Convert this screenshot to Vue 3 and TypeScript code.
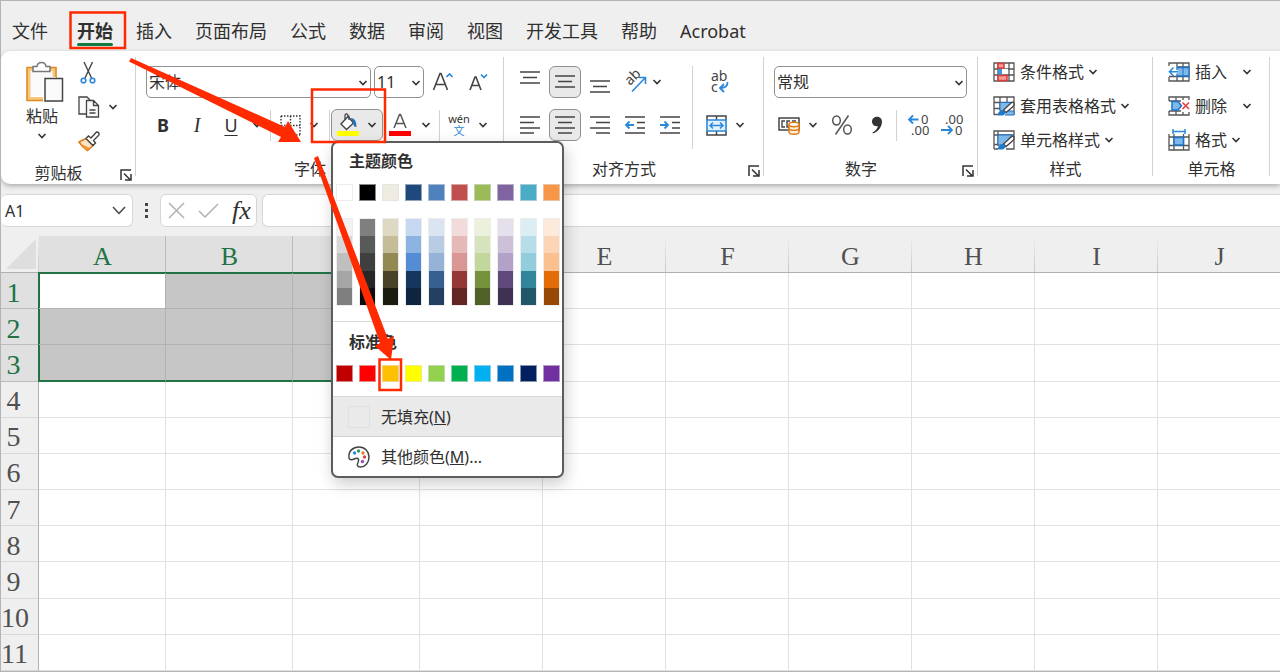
<script setup lang="ts">
import { h, ref } from 'vue'

const tabs = ['文件', '开始', '插入', '页面布局', '公式', '数据', '审阅', '视图', '开发工具', '帮助', 'Acrobat']
const activeTab = ref('开始')

const Chevron = () =>
  h('svg', { class: 'chevron', width: 10, height: 6, viewBox: '0 0 10 6', 'aria-hidden': 'true' }, [
    h('path', { d: 'M1.5 1 5 4.5 8.500 1', fill: 'none', stroke: '#333', 'stroke-width': 1.6 }),
  ])

const Launcher = () =>
  h('svg', { width: 12, height: 12, viewBox: '0 0 12 12', 'aria-hidden': 'true' }, [
    h('path', { d: 'M1 11V1H11M4 4.500 10 10.500M11 5V11H5', fill: 'none', stroke: '#333', 'stroke-width': 1.5 }),
  ])

const themeColumns: string[][] = [
  ['#ffffff', '#f2f2f2', '#d8d8d8', '#bfbfbf', '#a5a5a5', '#7f7f7f'],
  ['#000000', '#7f7f7f', '#595959', '#3f3f3f', '#262626', '#0c0c0c'],
  ['#eeece1', '#ddd9c3', '#c4bd97', '#938953', '#494429', '#1d1b10'],
  ['#1f497d', '#c6d9f0', '#8db3e2', '#548dd4', '#17365d', '#0f243e'],
  ['#4f81bd', '#dbe5f1', '#b8cce4', '#95b3d7', '#366092', '#244061'],
  ['#c0504d', '#f2dcdb', '#e5b9b7', '#d99694', '#953734', '#632423'],
  ['#9bbb59', '#ebf1dd', '#d7e3bc', '#c3d69b', '#76923c', '#4f6128'],
  ['#8064a2', '#e5e0ec', '#ccc1d9', '#b2a2c7', '#5f497a', '#3f3151'],
  ['#4bacc6', '#dbeef3', '#b7dde8', '#92cddc', '#31859b', '#205867'],
  ['#f79646', '#fdeada', '#fbd5b5', '#fac08f', '#e36c09', '#974806'],
]
const standardColors = ['#c00000', '#ff0000', '#ffc000', '#ffff00', '#92d050', '#00b050', '#00b0f0', '#0070c0', '#002060', '#7030a0']

const columns = ['A', 'B', 'C', 'D', 'E', 'F', 'G', 'H', 'I', 'J']
const rows = 11
const selection = { cols: 3, rows: 3 }

function cellClass(r: number, c: number) {
  const inside = r <= selection.rows && c < selection.cols
  return {
    picked: inside,
    active: r === 1 && c === 0,
    'edge-top': inside && r === 1,
    'edge-bottom': inside && r === selection.rows,
    'edge-left': inside && c === 0,
    'edge-right': inside && c === selection.cols - 1,
  }
}
</script>

<template>
  <div class="app">
    <nav class="tabs" aria-label="功能区">
      <button v-for="t in tabs" :key="t" type="button" class="tab" :class="{ current: t === activeTab }" @click="activeTab = t">{{ t }}</button>
    </nav>

    <section class="ribbon">
      <div class="group">
        <div class="clip">
          <button type="button" class="paste">
            <svg width="38" height="42" viewBox="0 0 38 42">
              <path d="M2.500 8H28.500V38H2.500Z" fill="#fff" stroke="#f7c77c" stroke-width="4" />
              <path d="M1 6.500H30V39.500H1Z" fill="none" stroke="#e08a26" stroke-width="1.500" />
              <path d="M5 10H26V35H5Z" fill="#fafafa" />
              <path d="M7 10.500V5.500H11C11.500 0 19.500 0 20 5.500H24V10.500Z" fill="#fff" stroke="#777" stroke-width="1.5" />
              <path d="M17 16H30V40H17Z" fill="#fff" />
              <path d="M19 17.500H36.500V40H19Z" fill="#fafafa" stroke="#444" stroke-width="1.500" />
            </svg>
            <span>粘贴</span>
            <Chevron />
          </button>
          <div class="clip-tools">
            <button type="button" class="tool" aria-label="剪切">
              <svg width="21" height="22" viewBox="0 0 21 22" fill="none">
                <path d="M6 0 13.500 16M14.500 0 7 16" stroke="#444" stroke-width="1.400" />
                <circle cx="5.500" cy="18.500" r="2.300" stroke="#2b88d8" stroke-width="1.600" />
                <circle cx="14.500" cy="18.500" r="2.300" stroke="#2b88d8" stroke-width="1.600" />
              </svg>
            </button>
            <button type="button" class="tool" aria-label="复制">
              <svg width="21" height="22" viewBox="0 0 21 22" fill="#fafafa" stroke="#444" stroke-width="1.300">
                <path d="M8 18H1V1H9L12 4" />
                <path d="M8.500 4.500H15.500L20.500 9.500V21H8.500ZM15.500 4.500V9.500H20.500M11.500 14H17.500M11.500 17H17.500" />
              </svg>
              <Chevron />
            </button>
            <button type="button" class="tool" aria-label="格式刷">
              <svg width="22" height="21" viewBox="0 0 22 21">
                <path d="M1 11 8 7.500 15 14.500 9.500 19.500Q4 16 1 11Z" fill="#fbe3c4" stroke="#e07b16" stroke-width="1.500" />
                <path d="M3 13 11 16.500 9.500 19.500Q5 17 3 13Z" fill="#ee9a35" />
                <path d="M8 7.500 10.500 5 13 7 18.500 1Q21.500 1 21 4L15.500 9.500 17.500 12 15 14.500Z" fill="#fff" stroke="#444" stroke-width="1.400" />
              </svg>
            </button>
          </div>
        </div>
        <div class="caption launchable"><span>剪贴板</span><button type="button" aria-label="剪贴板设置"><Launcher /></button></div>
      </div>

      <div class="group">
        <div class="body font-body">
          <div class="line">
            <label class="combo wide"><select aria-label="字体"><option>宋体</option></select><Chevron /></label>
            <label class="combo small"><select aria-label="字号"><option>11</option></select><Chevron /></label>
            <button type="button" class="tool grow-font" aria-label="增大字号">
              <svg width="22" height="22" viewBox="0 0 22 22" fill="none">
                <path d="M1.500 19 8 2.500H9L15.500 19M4 13.500H13" stroke="#444" stroke-width="1.600" /><path d="M14.500 6 17.500 3 20.500 6" stroke="#2b88d8" stroke-width="1.700" />
              </svg>
            </button>
            <button type="button" class="tool" aria-label="减小字号">
              <svg width="22" height="22" viewBox="0 0 22 22" fill="none">
                <path d="M2 19 7 6H8L13 19M4 14.500H11" stroke="#444" stroke-width="1.600" /><path d="M13 3.500 16 6.500 19 3.500" stroke="#2b88d8" stroke-width="1.700" />
              </svg>
            </button>
          </div>
          <div class="line">
            <button type="button" class="letter"><b>B</b></button>
            <button type="button" class="letter"><i>I</i></button>
            <button type="button" class="letter"><u>U</u></button>
            <button type="button" class="drop" aria-label="下划线选项"><Chevron /></button>
            <span class="rule"></span>
            <button type="button" class="tool w30" aria-label="边框">
              <svg width="21" height="21" viewBox="0 0 21 21" fill="none" stroke="#333"><path d="M1 1H20V20M1 1V20M10.500 1V20M1 10.500H20M1 20H20" stroke-width="1.400" stroke-dasharray="1.500 1.500" /></svg>
            </button>
            <button type="button" class="drop" aria-label="边框选项"><Chevron /></button>
            <span class="rule tight"></span>
            <div class="fill-holder">
              <button type="button" class="fill-button" aria-label="填充颜色">
                <svg width="22" height="24" viewBox="0 0 22 24">
                  <path d="M4 11 11 3.500 16.500 10 9.500 16.500Z" fill="#fff" stroke="#444" stroke-width="1.400" />
                  <path d="M8 7V3Q8 0.500 10 1L12 3.500V7" fill="none" stroke="#444" stroke-width="1.300" />
                  <path d="M13.500 5Q19.500 5 19.500 14Q16 14 16.500 10Z" fill="#1e73b8" />
                  <path d="M0 18H22V23H0Z" fill="#ff0" />
                </svg>
                <Chevron />
              </button>
              <div class="menu">
                <h3>主题颜色</h3>
                <div class="swatches">
                  <button v-for="(c, i) in themeColumns" :key="i" type="button" class="swatch" :style="{ backgroundColor: c[0] }" :aria-label="c[0]"></button>
                </div>
                <div class="tints">
                  <div v-for="(c, i) in themeColumns" :key="i" class="tint-column">
                    <button v-for="t in c.slice(1)" :key="t" type="button" :style="{ backgroundColor: t }" :aria-label="t"></button>
                  </div>
                </div>
                <h3 class="second">标准色</h3>
                <div class="swatches standard">
                  <button v-for="c in standardColors" :key="c" type="button" class="swatch" :style="{ backgroundColor: c }" :aria-label="c"></button>
                </div>
                <button type="button" class="entry none"><span class="empty"></span><span>无填充(<u>N</u>)</span></button>
                <button type="button" class="entry">
                  <svg width="22" height="22" viewBox="0 0 22 22">
                    <path d="M1 12C0 5 5 1 11 1C17 1 21 5.500 21 11C21 17 17 21 12.500 21C8.500 21 9 18.500 10 16.500C11.500 13 10 11.500 7.500 12.500C5 13.500 2 15 1 12Z" fill="#fff" stroke="#444" stroke-width="1.500" />
                    <circle cx="6.500" cy="7" r="1.700" fill="#2b88d8" /><circle cx="10.500" cy="5" r="1.700" fill="#2ca05a" /><circle cx="15" cy="7" r="1.700" fill="#e8792b" /><circle cx="16.500" cy="11" r="1.700" fill="#e0453c" /><circle cx="14.500" cy="15.500" r="1.700" fill="#9b4fb5" />
                  </svg>
                  <span>其他颜色(<u>M</u>)...</span>
                </button>
              </div>
            </div>
            <button type="button" class="tool font-color" aria-label="字体颜色">
              <svg width="22" height="24" viewBox="0 0 22 24"><path d="M5 15 10.500 1.500H11.500L17 15M7 10.500H15" fill="none" stroke="#555" stroke-width="1.500" /><path d="M0 18H22V23H0Z" fill="#f00" /></svg>
            </button>
            <button type="button" class="drop" aria-label="字体颜色选项"><Chevron /></button>
            <span class="rule"></span>
            <button type="button" class="pinyin"><span>wén</span><span class="han">文</span></button>
            <button type="button" class="drop" aria-label="拼音选项"><Chevron /></button>
          </div>
        </div>
        <div class="caption launchable"><span>字体</span></div>
      </div>

      <div class="group">
        <div class="body align-body">
          <div class="align-main">
            <div class="line">
              <button type="button" class="tool box" aria-label="顶端对齐"><svg width="20" height="24" viewBox="0 0 20 24"><path d="M0 2H20M3 7.500H17M0 13H20" class="bar" /></svg></button>
              <button type="button" class="tool box on" aria-label="垂直居中"><svg width="20" height="24" viewBox="0 0 20 24"><path d="M0 6H20M3 11.500H17M0 17H20" class="bar" /></svg></button>
              <button type="button" class="tool box" aria-label="底端对齐"><svg width="20" height="24" viewBox="0 0 20 24"><path d="M0 11H20M3 16.500H17M0 22H20" class="bar" /></svg></button>
              <button type="button" class="tool box" aria-label="方向">
                <svg width="23" height="24" viewBox="0 0 23 24"><text x="0" y="0" transform="translate(6 16) rotate(-45)" font-size="14" fill="#444">ab</text><path d="M8 21.500 21 8M15 7.500H21.500V14" fill="none" stroke="#2b88d8" stroke-width="1.600" /></svg>
              </button>
              <button type="button" class="drop near" aria-label="方向选项"><Chevron /></button>
            </div>
            <div class="line">
              <button type="button" class="tool box" aria-label="左对齐"><svg width="20" height="20" viewBox="0 0 20 20"><path d="M0 2H20M0 7.500H14M0 13H20M0 18H14" class="bar" /></svg></button>
              <button type="button" class="tool box on" aria-label="居中"><svg width="20" height="20" viewBox="0 0 20 20"><path d="M0 2H20M3 7.500H17M0 13H20M3 18H17" class="bar" /></svg></button>
              <button type="button" class="tool box" aria-label="右对齐"><svg width="20" height="20" viewBox="0 0 20 20"><path d="M0 2H20M6 7.500H20M0 13H20M6 18H20" class="bar" /></svg></button>
              <button type="button" class="tool box" aria-label="减少缩进"><svg width="20" height="20" viewBox="0 0 20 20"><path d="M0 2H20M12 7.500H20M12 13H20M0 18H20" class="bar" /><path d="M9 10H1M4.500 6.500 1 10 4.500 13.500" class="arrow" /></svg></button>
              <button type="button" class="tool box" aria-label="增加缩进"><svg width="20" height="20" viewBox="0 0 20 20"><path d="M0 2H20M12 7.500H20M12 13H20M0 18H20" class="bar" /><path d="M0 10H8M4.500 6.500 8 10 4.500 13.500" class="arrow" /></svg></button>
            </div>
          </div>
          <span class="rule tall"></span>
          <div class="wrap-tools">
            <div class="line">
              <button type="button" class="tool w34" aria-label="自动换行">
                <svg width="21" height="24" viewBox="0 0 21 24"><text x="3" y="11" font-size="14" fill="#444">ab</text><text x="3" y="22" font-size="14" fill="#444">c</text><path d="M19.500 12Q20 18 12 18M16 14 12 18 16 22" fill="none" stroke="#2b88d8" stroke-width="1.800" /></svg>
              </button>
            </div>
            <div class="line">
              <button type="button" class="tool w30" aria-label="合并后居中">
                <svg width="21" height="21" viewBox="0 0 21 21" fill="none"><path d="M1 5V1H20V5M10.500 1V5M1 16V20H20V16M10.500 16V20" stroke="#444" stroke-width="1.500" /><path d="M1 5H20V16H1Z" fill="#e3f1fc" stroke="#2b88d8" stroke-width="1.600" /><path d="M4 10.500H17M7 7.500 4 10.500 7 13.500M14 7.500 17 10.500 14 13.500" stroke="#2b88d8" stroke-width="1.500" /></svg>
              </button>
              <button type="button" class="drop" aria-label="合并选项"><Chevron /></button>
            </div>
          </div>
        </div>
        <div class="caption launchable"><span>对齐方式</span><button type="button" aria-label="对齐设置"><Launcher /></button></div>
      </div>

      <div class="group">
        <div class="body number-body">
          <div class="line format-line">
            <label class="combo full"><select aria-label="数字格式"><option>常规</option></select><Chevron /></label>
          </div>
          <div class="line">
            <button type="button" class="tool w30" aria-label="会计数字格式">
              <svg width="22" height="20" viewBox="0 0 22 20"><path d="M1 3H21V15H1Z" fill="#fff" stroke="#444" stroke-width="1.500" /><path d="M7 6H4V12H7M12 6H9V12H12M14 6H18" fill="none" stroke="#444" stroke-width="1.400" /><path d="M11 9.500V17C11 20 21 20 21 17V9.500" fill="#fdebd7" stroke="#e07b16" stroke-width="1.500" /><ellipse cx="16" cy="9.500" rx="5" ry="2.200" fill="#fff" stroke="#e07b16" stroke-width="1.500" /><path d="M11 13.500C12 16 20 16 21 13.500" fill="none" stroke="#e07b16" stroke-width="1.400" /></svg>
            </button>
            <button type="button" class="drop" aria-label="会计格式选项"><Chevron /></button>
            <button type="button" class="tool percent" aria-label="百分比样式">
              <svg width="22" height="22" viewBox="0 0 22 22" fill="none" stroke="#555" stroke-width="1.500"><ellipse cx="5.500" cy="6.500" rx="3.800" ry="4.500" /><ellipse cx="16.500" cy="15.500" rx="3.800" ry="4.500" /><path d="M17.500 1.500 4.500 20.500" /></svg>
            </button>
            <button type="button" class="tool w30" aria-label="千位分隔样式">
              <svg width="12" height="20" viewBox="0 0 12 20"><path d="M11 6.500C11 12 7 17 2 18.500L1.500 17.500C4.500 16 6.500 13.500 7 11C3.500 12 1 9.500 1 6.500C1 0 11 0 11 6.500Z" fill="#333" /></svg>
            </button>
            <span class="rule"></span>
            <button type="button" class="tool decimals" aria-label="增加小数位数">
              <svg width="22" height="24" viewBox="0 0 22 24" font-size="13" fill="#444"><text x="14" y="11">0</text><text x="4" y="22">.00</text><path d="M11.500 6.500H2M6 2.500 2 6.500 6 10.500" class="arrow" /></svg>
            </button>
            <button type="button" class="tool decimals" aria-label="减少小数位数">
              <svg width="22" height="24" viewBox="0 0 22 24" font-size="13" fill="#444"><text x="4" y="11">.00</text><text x="14" y="22">0</text><path d="M0 17H10.500M7 13 11 17 7 21" class="arrow" /></svg>
            </button>
          </div>
        </div>
        <div class="caption launchable"><span>数字</span><button type="button" aria-label="数字设置"><Launcher /></button></div>
      </div>

      <div class="group">
        <div class="list">
          <button type="button" class="item">
            <svg width="22" height="20" viewBox="0 0 22 20" fill="none"><path d="M1 1H21V19H1ZM1 7H21M1 13H21M5 1V19M16 1V19" stroke="#555" stroke-width="1.300" /><path d="M5 1.500H11V6H5ZM5 13.500H14V18.500H5Z" fill="#fc9a9a" stroke="#e03a3a" stroke-width="1.500" /><path d="M5 7H9V12.500H5Z" fill="#3f94dc" /><path d="M9 7H15V12H9Z" fill="#fff" /></svg>
            <span>条件格式</span><Chevron />
          </button>
          <button type="button" class="item">
            <svg width="22" height="20" viewBox="0 0 22 20" fill="none"><path d="M1 19V1H21V19M1 6.500H21M1 12.500H7M1 18.500H6M7 1V14M14 1V7" stroke="#555" stroke-width="1.300" /><path d="M7 6.500H18L11 15H7Z" fill="#7fb9ea" stroke="#1e73c8" /><path d="M15 15H21V19H12" fill="#7fb9ea" stroke="#1e73c8" /><path d="M20.500 6.500Q22 8 19.500 11L13 16.500 10.500 14 17 8Q19.500 5.500 20.500 6.500Z" fill="#fff" stroke="#444" stroke-width="1.300" /><path d="M10 14Q6 14 4.500 19Q11 21 13 16.500Z" fill="#2379c9" /></svg>
            <span>套用表格格式</span><Chevron />
          </button>
          <button type="button" class="item">
            <svg width="22" height="20" viewBox="0 0 22 20" fill="none"><path d="M1 19V1H21V19H13M1 5H21M1 14.500H6M1 19H5M5 1V16" stroke="#555" stroke-width="1.300" /><path d="M5 5H19L11 15H5Z" fill="#7fb9ea" stroke="#1e73c8" /><path d="M20.500 6.500Q22 8 19.500 11L13 16.500 10.500 14 17 8Q19.500 5.500 20.500 6.500Z" fill="#fff" stroke="#444" stroke-width="1.300" /><path d="M10 14Q6 14 4.500 19Q11 21 13 16.500Z" fill="#2379c9" /></svg>
            <span>单元格样式</span><Chevron />
          </button>
        </div>
        <div class="caption"><span>样式</span></div>
      </div>

      <div class="group">
        <div class="list">
          <button type="button" class="item spread">
            <svg width="22" height="20" viewBox="0 0 22 20" fill="none"><path d="M1 4V1H21V19H1V15M9 1V5M15 1V19M9 14V19M1 14.500H21M10 5H21" stroke="#555" stroke-width="1.300" /><path d="M9 5.500H21V14H9Z" fill="#7fb9ea" stroke="#1e73c8" stroke-width="1.300" /><path d="M15 5.500V14" stroke="#1e73c8" /><path d="M0 8H10V11.500H0Z" fill="#fff" /><path d="M10 9.700H1.500M5.500 5.500 1.500 9.700 5.500 14" stroke="#2b88d8" stroke-width="1.600" /></svg>
            <span>插入</span><Chevron />
          </button>
          <button type="button" class="item spread">
            <svg width="22" height="20" viewBox="0 0 22 20" fill="none"><path d="M1 5V1H21V5M1 15V19H21V15M8 1V5M15 1V5M8 15V19M15 15V19M1 5H21M1 15H21" stroke="#555" stroke-width="1.300" /><path d="M13 4H22V16H13Z" fill="#fff" /><path d="M4 5.500H10L13.500 9.700 10 14H4Z" fill="#7fb9ea" stroke="#1e73c8" stroke-width="1.500" /><path d="M14.500 6.500 21 13M21 6.500 14.500 13" stroke="#ee3b3b" stroke-width="1.600" /></svg>
            <span>删除</span><Chevron />
          </button>
          <button type="button" class="item">
            <svg width="22" height="22" viewBox="0 0 22 22" fill="none"><path d="M1 5V21H21V5M1 8H21M1 16.500H21M6 5V21M15.500 5V21" stroke="#555" stroke-width="1.300" /><path d="M6 8.500H15.500V16H6Z" fill="#7fb9ea" stroke="#1e73c8" stroke-width="1.500" /><path d="M5 2.500H17M5 0V5M17 0V5" stroke="#2b88d8" stroke-width="1.500" /></svg>
            <span>格式</span><Chevron />
          </button>
        </div>
        <div class="caption"><span>单元格</span></div>
      </div>
    </section>

    <section class="formula">
      <label class="name-box"><input type="text" value="A1" aria-label="名称框" /><svg width="14" height="9" viewBox="0 0 14 9"><path d="M1 1 7 7.500 13 1" fill="none" stroke="#444" stroke-width="1.500" /></svg></label>
      <span class="dots"><i></i><i></i><i></i></span>
      <div class="formula-tools">
        <button type="button" aria-label="取消"><svg width="17" height="17" viewBox="0 0 17 17"><path d="M1 1 16 16M16 1 1 16" stroke="#b0b0b0" stroke-width="1.500" /></svg></button>
        <button type="button" aria-label="输入"><svg width="21" height="15" viewBox="0 0 21 15"><path d="M1 8 7 14 20 1" fill="none" stroke="#b0b0b0" stroke-width="1.500" /></svg></button>
        <button type="button" class="fx">fx</button>
      </div>
      <input type="text" class="formula-input" aria-label="编辑栏" />
    </section>

    <div class="sheet">
      <table>
        <colgroup>
          <col class="col-head" />
          <col v-for="(c, i) in columns" :key="c" :class="i < 3 ? 'col-wide' : 'col-normal'" />
        </colgroup>
        <thead>
          <tr>
            <th class="corner"><svg width="30" height="30" viewBox="0 0 30 30"><path d="M30 0V30H0Z" fill="#dedede" /></svg></th>
            <th v-for="(c, i) in columns" :key="c" scope="col" :class="{ picked: i < selection.cols }">{{ c }}</th>
          </tr>
        </thead>
        <tbody>
          <tr v-for="r in rows" :key="r">
            <th scope="row" :class="{ picked: r <= selection.rows }">{{ r }}</th>
            <td v-for="(c, i) in columns" :key="c" :class="cellClass(r, i)"></td>
          </tr>
        </tbody>
      </table>
    </div>

    <svg class="marks" width="420" height="400" viewBox="0 0 420 400" aria-hidden="true">
      <g fill="none" stroke="#ff2a00" stroke-width="2.500">
        <path d="M70.500 12.500H125V48H70.500Z" />
        <path d="M312 89.500H385V142H312Z" />
        <path d="M379.500 359.500H401V390H379.500Z" />
      </g>
      <path d="M131 58 285 127 288 121 301 142H278L281 137 129 61.500Z" fill="#ff2a00" />
      <path d="M314 158 318 156 388 339 394 336 391 360 375 346 380 343Z" fill="#ff2a00" />
    </svg>
  </div>
</template>

<style>
body {
  margin: 0;
}
</style>

<style scoped>
* {
  box-sizing: border-box;
}
.app {
  position: relative;
  display: flex;
  flex-direction: column;
  height: 100vh;
  border-top: 1px solid #b4b4b4;
  border-left: 1px solid #b4b4b4;
  background: #efefef;
  color: #303030;
  font-family: 'Noto Sans', 'Noto Sans CJK SC', sans-serif;
  font-size: 16px;
  overflow: hidden;
}
button,
input,
select {
  margin: 0;
  padding: 0;
  border: 0;
  background: none;
  color: inherit;
  font: inherit;
}
svg {
  display: block;
  flex: none;
  overflow: visible;
}
svg text {
  font-family: 'Noto Sans', sans-serif;
}
.tabs {
  display: flex;
  gap: 23px;
  height: 50px;
  padding: 15px 11px 0;
  flex: none;
}
.tab {
  position: relative;
  height: 30px;
  font-size: 18px;
  line-height: 30px;
  white-space: nowrap;
}
.tab:first-child {
  margin-right: 6px;
}
.tab.current {
  font-weight: 700;
}
.tab.current::after {
  content: '';
  position: absolute;
  left: 0;
  right: 0;
  bottom: 0;
  height: 3px;
  border-radius: 2px;
  background: #107c41;
}
.ribbon {
  position: relative;
  z-index: 2;
  display: grid;
  grid-template-columns: 135fr 368fr 260fr 214fr 175fr 117fr 10fr;
  grid-template-rows: 133px;
  flex: none;
  border-radius: 9px 0 0 9px;
  background: #fff;
  box-shadow: 0 2px 5px rgba(0, 0, 0, 0.28);
}
.group {
  display: flex;
  flex-direction: column;
  background: linear-gradient(#d2d2d2, #d2d2d2) right 6px / 1px 119px no-repeat;
}
.caption {
  display: flex;
  align-items: center;
  justify-content: center;
  height: 30px;
  margin-top: auto;
  flex: none;
  line-height: 24px;
}
.caption.launchable {
  position: relative;
  padding-right: 20px;
}
.caption button {
  position: absolute;
  right: 4px;
  top: 11px;
}
.body {
  display: flex;
  flex-direction: column;
  gap: 11px;
  padding: 15px 10px 0;
}
.line {
  display: flex;
  align-items: center;
  height: 32px;
}
.tool,
.drop,
.letter {
  display: flex;
  align-items: center;
  justify-content: center;
  height: 32px;
  flex: none;
}
.drop {
  width: 18px;
}
.letter {
  width: 34px;
  font-size: 18px;
}
.letter i {
  font-family: 'Liberation Serif', serif;
  font-size: 20px;
}
.letter u {
  text-underline-offset: 3px;
}
.w30 {
  width: 30px;
}
.w34 {
  width: 34px;
}
.rule {
  width: 1px;
  height: 31px;
  margin: 0 4px;
  background: #d2d2d2;
  flex: none;
}
.rule.tight {
  margin: 0 1px 0 6px;
}
.rule.tall {
  height: 83px;
  margin: 0;
}
.clip {
  display: flex;
}
.paste {
  display: flex;
  flex-direction: column;
  align-items: center;
  width: 56px;
  margin-left: 13px;
  padding-top: 10px;
}
.paste svg:first-child {
  margin-left: 6px;
}
.paste span {
  height: 26px;
  line-height: 26px;
}
.paste .chevron {
  margin-top: 4px;
}
.clip-tools {
  display: flex;
  flex-direction: column;
  padding: 5px 0 0 8px;
}
.clip-tools .tool {
  justify-content: flex-start;
  gap: 9px;
  height: 34px;
}
.combo {
  position: relative;
  display: block;
  height: 32px;
  border: 1px solid #919191;
  border-radius: 5px;
}
.combo select {
  width: 100%;
  height: 30px;
  padding-left: 2px;
  appearance: none;
}
.combo .chevron {
  position: absolute;
  right: 2px;
  top: 13px;
  pointer-events: none;
}
.wide {
  width: 225px;
  margin-right: 3px;
}
.small {
  width: 50px;
}
.full {
  width: 100%;
}
.grow-font {
  margin: 0 14px 0 8px;
}
.fill-holder {
  position: relative;
}
.fill-button {
  display: flex;
  align-items: center;
  justify-content: center;
  gap: 8px;
  width: 52px;
  height: 32px;
  border: 1px solid #919191;
  border-radius: 6px;
  background: #e9e9e9;
}
.font-color {
  width: 34px;
}
.pinyin {
  display: flex;
  flex-direction: column;
  align-items: center;
  width: 30px;
  font-size: 11px;
  line-height: 12px;
}
.han {
  color: #2b88d8;
}
.align-body {
  flex-direction: row;
  gap: 0;
}
.align-main {
  display: flex;
  flex-direction: column;
  gap: 11px;
  width: 178px;
}
.align-main .line {
  gap: 3px;
}
.wrap-tools {
  display: flex;
  flex-direction: column;
  gap: 11px;
  padding-left: 8px;
}
.box {
  width: 32px;
  border: 1px solid transparent;
  border-radius: 6px;
}
.box.on {
  border-color: #919191;
  background: #e9e9e9;
}
.near {
  margin-left: -6px;
}
.bar {
  fill: none;
  stroke: #444;
  stroke-width: 1.600;
}
.arrow {
  fill: none;
  stroke: #2b88d8;
  stroke-width: 1.800;
}
.number-body {
  padding-right: 0;
}
.format-line {
  padding-right: 11px;
}
.percent {
  width: 40px;
}
.decimals {
  width: 34px;
}
.list {
  display: flex;
  flex-direction: column;
  align-items: flex-start;
  height: 103px;
  padding: 4px 0 0 15px;
}
.item {
  display: flex;
  align-items: center;
  gap: 5px;
  height: 34px;
  flex: none;
  line-height: 24px;
  white-space: nowrap;
}
.item .chevron {
  margin-left: -1px;
}
.item.spread .chevron {
  margin-left: 10px;
}
.menu {
  position: absolute;
  top: 32px;
  left: 0;
  width: 233px;
  border: 2px solid #5c5c5c;
  border-radius: 7px;
  background: #fff;
  box-shadow: 2px 6px 16px rgba(0, 0, 0, 0.2);
  overflow: hidden;
}
.menu h3 {
  height: 37px;
  margin: 0;
  padding: 0 16px;
  font-size: 16px;
  font-weight: 700;
  line-height: 37px;
}
.swatches,
.tints {
  display: flex;
  gap: 6px;
  padding: 4px 2px 0 3px;
}
.swatch {
  width: 17px;
  height: 17px;
  border: 1px solid rgba(225, 225, 225, 0.6);
}
.tints {
  padding-top: 17px;
}
.tint-column {
  display: flex;
  flex-direction: column;
  width: 17px;
  height: 88px;
  border: 1px solid rgba(225, 225, 225, 0.6);
}
.tint-column button {
  flex: 1;
}
.menu h3.second {
  height: 44px;
  margin-top: 15px;
  border-top: 1px solid #d9d9d9;
  line-height: 40px;
}
.swatches.standard {
  padding: 0 2px 14px 3px;
}
.entry {
  display: flex;
  align-items: center;
  gap: 11px;
  width: 100%;
  height: 39px;
  padding-left: 15px;
  line-height: 24px;
}
.entry.none {
  height: 41px;
  border-top: 1px solid #d9d9d9;
  border-bottom: 1px solid #d0d0d0;
  background: #eaeaea;
}
.empty {
  width: 22px;
  height: 22px;
  border: 1px solid #e0e0e0;
}
.formula {
  display: flex;
  align-items: flex-start;
  height: 52px;
  padding-top: 10px;
  flex: none;
}
.name-box {
  display: flex;
  align-items: center;
  width: 132px;
  height: 33px;
  padding: 0 6px 0 4px;
  border: 1px solid #d6d6d6;
  border-left: 0;
  border-radius: 6px;
  background: #fff;
}
.name-box input {
  flex: 1;
  width: 0;
  height: 30px;
}
.dots {
  display: flex;
  flex-direction: column;
  gap: 3px;
  width: 27px;
  padding: 9px 0 0 12px;
}
.dots i {
  width: 3px;
  height: 3px;
  background: #444;
}
.formula-tools {
  display: flex;
  align-items: center;
  gap: 13px;
  width: 97px;
  height: 33px;
  padding-left: 7px;
  border: 1px solid #d6d6d6;
  border-radius: 6px;
  background: #fff;
}
.fx {
  font-family: 'Liberation Serif', serif;
  font-size: 26px;
  font-style: italic;
  line-height: 28px;
}
.formula-input {
  flex: 1;
  height: 33px;
  margin-left: 5px;
  padding: 0 8px;
  border: 1px solid #d6d6d6;
  border-right: 0;
  border-radius: 6px 0 0 6px;
  background: #fff;
}
.sheet {
  flex: 1;
  min-height: 0;
  border-bottom: 1px solid #b4b4b4;
}
table {
  width: 100%;
  height: 100%;
  table-layout: fixed;
  border-collapse: separate;
  border-spacing: 0;
}
.col-head {
  width: 38px;
}
.col-wide {
  width: 127px;
}
.col-normal {
  width: 123px;
}
th {
  padding: 0;
  color: #505050;
  font-family: 'Liberation Serif', serif;
  font-size: 26px;
  font-weight: 400;
  line-height: 28px;
}
thead th {
  height: 37px;
  padding-top: 5px;
  border-bottom: 1px solid #b0b0b0;
  background: linear-gradient(#efefef, #c8c8c8) right / 1px 100% no-repeat;
}
tbody th {
  padding: 4px 12px 0 0;
  border-right: 1px solid #b0b0b0;
  border-bottom: 1px solid #d8d8d8;
  font-size: 28px;
}
tbody tr:nth-child(n + 10) th {
  padding-right: 10px;
}
th.picked {
  border-bottom-color: #bcbcbc;
  background-color: #e0e0e0;
  color: #217346;
}
thead th.picked {
  background: linear-gradient(#bcbcbc, #bcbcbc) right / 1px 100% no-repeat #e0e0e0;
}
.corner svg {
  margin-left: 5px;
}
thead .corner {
  padding-top: 0;
}
td {
  padding: 0;
  border-right: 1px solid #e1e1e1;
  border-bottom: 1px solid #e1e1e1;
  background: #fff;
}
td.picked {
  border-color: #b2b2b2;
  background: #c6c6c6;
}
td.active {
  background: #fff;
}
td.edge-top {
  box-shadow: 0 -1px #217346, inset 0 1px #217346;
}
td.edge-left {
  box-shadow: -1px 0 #217346, inset 1px 0 #217346;
}
td.edge-top.edge-left {
  box-shadow: -1px -1px #217346, -1px 0 #217346, 0 -1px #217346, inset 1px 1px #217346;
}
td.edge-bottom {
  border-bottom: 2px solid #217346;
}
td.edge-right {
  border-right: 2px solid #217346;
}
.marks {
  position: absolute;
  top: -1px;
  left: -1px;
  z-index: 5;
  pointer-events: none;
}
</style>
